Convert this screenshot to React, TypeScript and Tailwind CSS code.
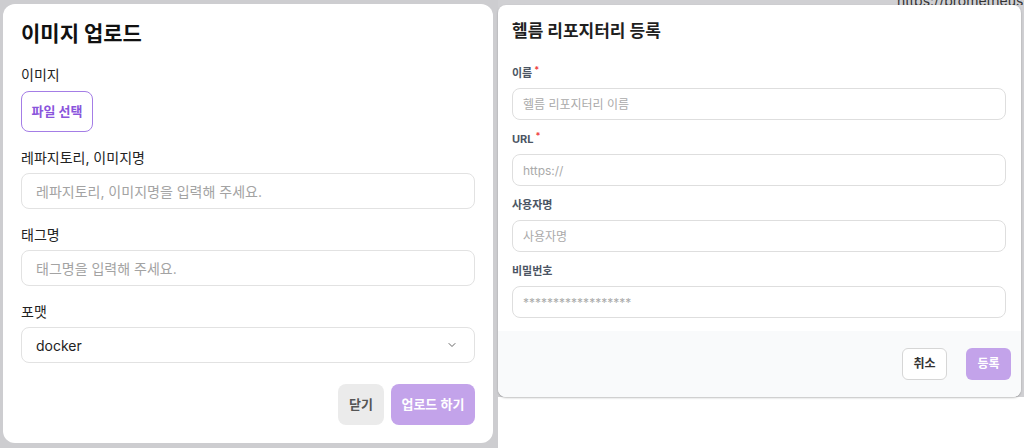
import { ChevronDown } from "lucide-react";

const font = "font-['Inter','Noto_Sans_CJK_KR',sans-serif]";

function UploadField({ label, children }: { label: string; children: React.ReactNode }) {
  return (
    <div className="flex flex-col">
      <label className="text-[14px] leading-5 text-[#222]">{label}</label>
      <div className="mt-[5px]">{children}</div>
    </div>
  );
}

function UploadInput({ placeholder }: { placeholder: string }) {
  return (
    <input
      className="h-[36px] w-full rounded-[8px] border border-[#e2e2e2] bg-white px-[14px] text-[14px] text-[#222] outline-none placeholder:text-[#a3a3a3]"
      placeholder={placeholder}
    />
  );
}

function UploadModal() {
  return (
    <div className="flex h-[439px] w-[490px] flex-col rounded-[12px] bg-white px-[18px] pt-[16px]">
      <h1 className="text-[21px] font-bold leading-[28px] text-[#111]">이미지 업로드</h1>
      <div className="mt-[17px] flex flex-col items-start">
        <label className="text-[14px] leading-5 text-[#222]">이미지</label>
        <button className="mt-[6px] h-[41px] w-[72px] rounded-[8px] border border-[#a47de6] text-[13px] font-bold text-[#8a55dc]">
          파일 선택
        </button>
      </div>
      <div className="mt-[16px] flex flex-col gap-[16px]">
        <UploadField label="레파지토리, 이미지명">
          <UploadInput placeholder="레파지토리, 이미지명을 입력해 주세요." />
        </UploadField>
        <UploadField label="태그명">
          <UploadInput placeholder="태그명을 입력해 주세요." />
        </UploadField>
        <UploadField label="포맷">
          <div className="flex h-[36px] w-full items-center justify-between rounded-[8px] border border-[#e2e2e2] pl-[14px] pr-[16px]">
            <span className="text-[14px] text-[#222]">docker</span>
            <ChevronDown size={12} strokeWidth={2} className="text-[#666]" />
          </div>
        </UploadField>
      </div>
      <div className="mt-[21px] flex justify-end gap-[7px]">
        <button className="h-[41px] w-[46px] rounded-[8px] bg-[#ebebeb] text-[13px] font-semibold text-[#555]">닫기</button>
        <button className="h-[41px] w-[84px] rounded-[8px] bg-[#c3a3ea] text-[13px] font-semibold text-white">업로드 하기</button>
      </div>
    </div>
  );
}

function HelmField({ label, required, placeholder }: { label: string; required?: boolean; placeholder: string }) {
  return (
    <div className="flex flex-col">
      <label className="flex h-4 items-center text-[11px] font-bold text-[#4b5563]">
        {label}
        {required && <span className="-mt-[6px] ml-[2px] text-[9px] text-[#ef4444]">*</span>}
      </label>
      <input
        className="mt-[7px] h-[32px] w-full rounded-[8px] border border-[#dedede] bg-white px-[10px] text-[12px] text-[#222] outline-none placeholder:text-[#aaaaaa]"
        placeholder={placeholder}
      />
    </div>
  );
}

function HelmModal() {
  return (
    <div className="flex h-[392px] w-[523px] flex-col overflow-hidden rounded-[8px] bg-white shadow-[0_1px_2px_rgba(0,0,0,0.25)]">
      <div className="px-[14px] pr-[15px] pt-[14px]">
        <h2 className="text-[17px] font-bold leading-6 text-[#1f1f1f]">헬름 리포지터리 등록</h2>
        <div className="mt-[22px] flex flex-col gap-[11px]">
          <HelmField label="이름" required placeholder="헬름 리포지터리 이름" />
          <HelmField label="URL" required placeholder="https://" />
          <HelmField label="사용자명" placeholder="사용자명" />
          <HelmField label="비밀번호" placeholder="******************" />
        </div>
      </div>
      <div className="mt-[13px] flex flex-1 items-center justify-end gap-[19px] bg-[#f9fafb] pr-[10px]">
        <button className="h-[32px] w-[45px] rounded-[6px] border border-[#d6d6d6] bg-white text-[12px] font-semibold text-[#333]">취소</button>
        <button className="h-[32px] w-[45px] rounded-[6px] bg-[#c3a3ea] text-[12px] font-bold text-white">등록</button>
      </div>
    </div>
  );
}

export default function App() {
  return (
    <div className={`${font} flex h-[448px] w-[1024px] overflow-hidden bg-white`}>
      <div className="h-full w-[498px] shrink-0 bg-[#cdcdd0] pl-[3px] pt-[4px]">
        <UploadModal />
      </div>
      <div className="flex h-full flex-1 flex-col">
        <div className="flex h-[397px] flex-col bg-[#d0d0d3]">
          <div className="h-[5px] overflow-hidden pl-[399px]">
            <p className="-mt-[9px] whitespace-nowrap text-[14px] leading-5 text-[#333]">https://prometheus-co</p>
          </div>
          <HelmModal />
        </div>
      </div>
    </div>
  );
}
